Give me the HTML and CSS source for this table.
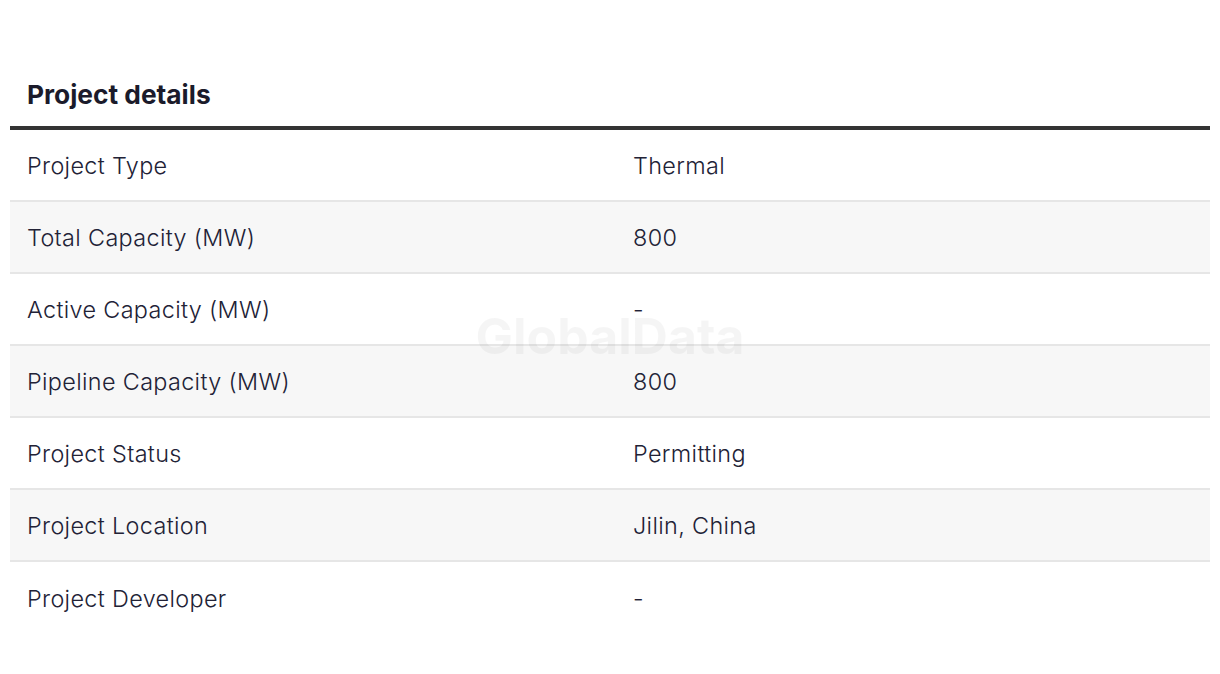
FILE: index.html
```html
<!DOCTYPE html>
<html>
<head>
<meta charset="utf-8">
<link rel="stylesheet" href="styles.css">
</head>
<body>
<section class="details">
  <h2 class="details-title">Project details</h2>
  <div class="table">
    <div class="row"><div class="cell label">Project Type</div><div class="cell value">Thermal</div></div>
    <div class="row alt"><div class="cell label">Total Capacity (MW)</div><div class="cell value">800</div></div>
    <div class="row"><div class="cell label">Active Capacity (MW)</div><div class="cell value">-</div></div>
    <div class="row alt"><div class="cell label">Pipeline Capacity (MW)</div><div class="cell value">800</div></div>
    <div class="row"><div class="cell label">Project Status</div><div class="cell value">Permitting</div></div>
    <div class="row alt"><div class="cell label">Project Location</div><div class="cell value">Jilin, China</div></div>
    <div class="row last"><div class="cell label">Project Developer</div><div class="cell value">-</div></div>
    <div class="watermark">GlobalData</div>
  </div>
</section>
</body>
</html>
```

FILE: styles.css
```css
html, body {
  margin: 0;
  padding: 0;
  background: #ffffff;
}
body {
  font-family: Inter, "Noto Sans", sans-serif;
  color: #1f1f33;
}
.details {
  padding: 74px 10px 0 10px;
}
.details-title {
  margin: 0;
  padding: 0 17px;
  font-size: 26.3px;
  font-weight: 700;
  line-height: 42px;
  color: #1b1b2b;
  height: 52px;
  box-sizing: border-box;
}
.table {
  position: relative;
  border-top: 4px solid #333333;
}
.row {
  display: grid;
  grid-template-columns: 606px 1fr;
  height: 72px;
  box-sizing: border-box;
  border-bottom: 2px solid #e6e6e6;
  background: #ffffff;
}
.row.alt {
  background: #f7f7f7;
}
.row.last {
  border-bottom: none;
}
.cell {
  display: flex;
  align-items: center;
  padding: 0 17px;
  font-size: 23.4px;
  font-weight: 300;
  letter-spacing: 0.35px;
  color: #222236;
}
.watermark {
  position: absolute;
  left: 0;
  right: 0;
  top: 176px;
  text-align: center;
  font-size: 50px;
  font-weight: 700;
  color: rgba(0, 0, 0, 0.04);
  pointer-events: none;
}
```
